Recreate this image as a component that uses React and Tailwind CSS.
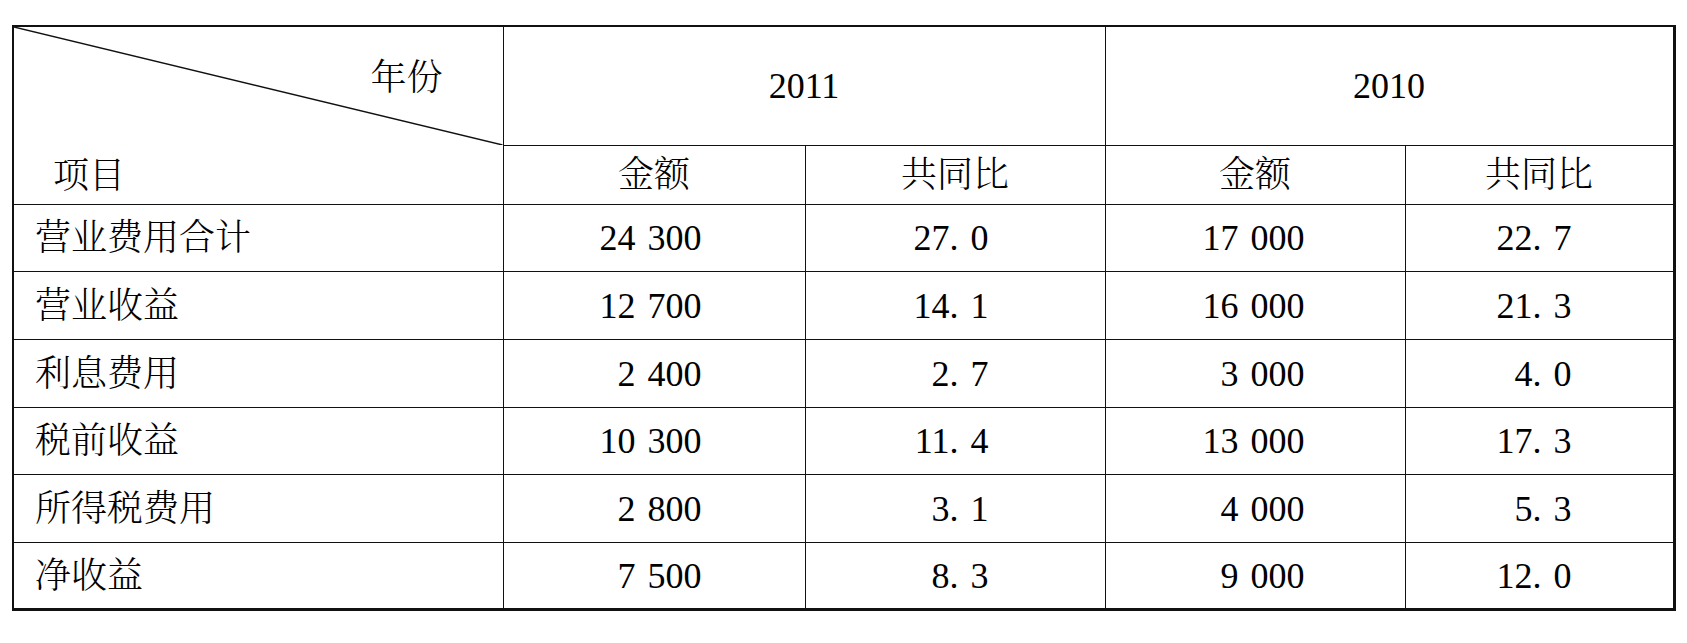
const rows = [
  ['营业费用合计', '24 300', '27. 0', '17 000', '22. 7'],
  ['营业收益', '12 700', '14. 1', '16 000', '21. 3'],
  ['利息费用', '2 400', '2. 7', '3 000', '4. 0'],
  ['税前收益', '10 300', '11. 4', '13 000', '17. 3'],
  ['所得税费用', '2 800', '3. 1', '4 000', '5. 3'],
  ['净收益', '7 500', '8. 3', '9 000', '12. 0'],
];

const rowH = ['h-[67px]', 'h-[68px]', 'h-[68px]', 'h-[67px]', 'h-[68px]', 'h-[67px]'];

const cell = 'border border-[#111] font-light';
const num = "border border-[#111] whitespace-pre [word-spacing:3px] font-['Liberation_Serif','Times_New_Roman',serif]";

export default function App() {
  return (
    <div className="min-h-screen bg-white pt-[25px] pl-[12px] text-black font-['Liberation_Serif','Noto_Serif_CJK_SC','Noto_Sans_CJK_SC',serif]">
      <table className="table-fixed border-collapse border-l-2 border-t-2 border-r-[3px] border-b-[3px] border-[#111] text-[36px] leading-none">
        <colgroup>
          <col className="w-[490px]" />
          <col className="w-[302px]" />
          <col className="w-[300px]" />
          <col className="w-[300px]" />
          <col className="w-[269px]" />
        </colgroup>
        <thead>
          <tr className="h-[118px]">
            <th rowSpan={2} className={`relative p-0 align-top ${cell}`}>
              <svg className="absolute left-0 top-0 h-[118px] w-full" viewBox="0 0 490 118" preserveAspectRatio="none">
                <line x1="0" y1="0" x2="490" y2="118" stroke="#111" strokeWidth="1.4" />
              </svg>
              <div className="flex h-[177px] flex-col justify-between">
                <div className="flex justify-end pr-[60px] pt-[33px]">年份</div>
                <div className="flex pl-[39px] pb-[10px]">项目</div>
              </div>
            </th>
            <th colSpan={2} className={`text-center font-normal ${num}`}>2011</th>
            <th colSpan={2} className={`text-center font-normal ${num}`}>2010</th>
          </tr>
          <tr className="h-[59px]">
            <th className={cell}>金额</th>
            <th className={cell}>共同比</th>
            <th className={cell}>金额</th>
            <th className={cell}>共同比</th>
          </tr>
        </thead>
        <tbody>
          {rows.map((r, i) => (
            <tr key={r[0]} className={rowH[i]}>
              <td className={`pl-[21px] ${cell}`}>{r[0]}</td>
              <td className={`pr-[103px] text-right ${num}`}>{r[1]}</td>
              <td className={`pr-[116px] text-right ${num}`}>{r[2]}</td>
              <td className={`pr-[100px] text-right ${num}`}>{r[3]}</td>
              <td className={`pr-[101px] text-right ${num}`}>{r[4]}</td>
            </tr>
          ))}
        </tbody>
      </table>
    </div>
  );
}
